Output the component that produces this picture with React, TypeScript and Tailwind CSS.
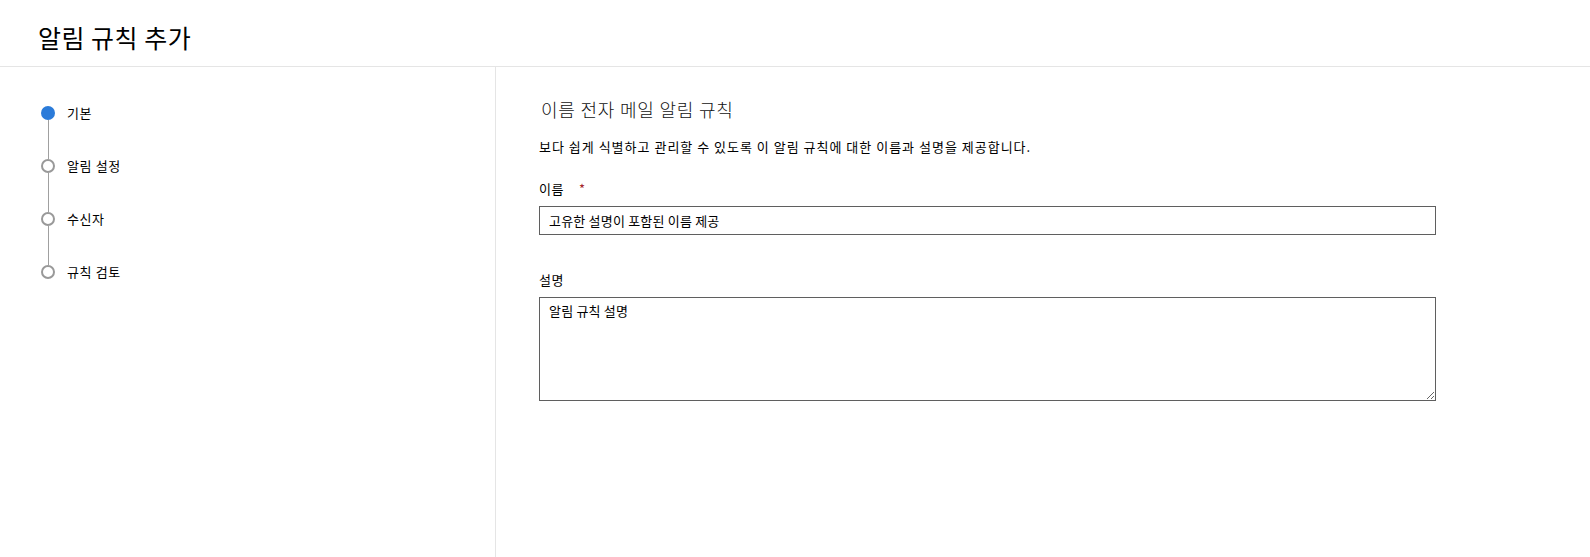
import React from "react";

const font = { fontFamily: '"Noto Sans CJK KR", "Noto Sans", sans-serif' };

const steps = ["기본", "알림 설정", "수신자", "규칙 검토"];

export default function App() {
  return (
    <div className="w-[1590px] h-[557px] bg-white text-black flex flex-col overflow-hidden" style={font}>
      <div className="h-[67px] border-b border-[#e5e5e5] flex items-center pl-[38px] pt-[8px] shrink-0">
        <h1 className="text-[25px] leading-none tracking-[0.5px]">알림 규칙 추가</h1>
      </div>
      <div className="flex flex-1">
        <div className="w-[496px] border-r border-[#e5e5e5] shrink-0 pl-[41px] pt-[39px]">
          {steps.map((s, i) => (
            <div key={s} className="flex">
              <div className="flex flex-col items-center w-[14px]">
                {i === 0 ? (
                  <div className="w-[14px] h-[14px] rounded-full bg-[#2b7bd9]" />
                ) : (
                  <div className="w-[14px] h-[14px] rounded-full border-2 border-[#999999] bg-white" />
                )}
                {i < steps.length - 1 && <div className="w-px h-[39px] bg-[#a0a0a0]" />}
              </div>
              <div className="ml-[12px] text-[13px] leading-[14px] tracking-[0.6px]">{s}</div>
            </div>
          ))}
        </div>
        <div className="flex-1 pl-[43px] pt-[30px]">
          <h2 className="text-[18px] leading-[24px] ml-[2px] font-light tracking-[0.8px] text-[#111]">이름 전자 메일 알림 규칙</h2>
          <p className="text-[13px] leading-[18px] mt-[17px] tracking-[1px]">
            보다 쉽게 식별하고 관리할 수 있도록 이 알림 규칙에 대한 이름과 설명을 제공합니다.
          </p>
          <div className="mt-[24px] text-[13px] leading-[18px] flex tracking-[0.5px]">
            <span>이름</span>
            <span className="ml-[15px] text-[#a4262c]">*</span>
          </div>
          <input
            className="mt-[8px] block w-[897px] h-[29px] border border-[#5f5f5f] px-[9px] text-[13px] outline-none tracking-[0.2px]"
            style={font}
            defaultValue="고유한 설명이 포함된 이름 제공"
          />
          <div className="mt-[36px] text-[13px] leading-[18px] tracking-[0.5px]">설명</div>
          <textarea
            className="mt-[8px] block w-[897px] h-[104px] border border-[#5f5f5f] px-[9px] py-[3px] text-[13px] outline-none resize-y tracking-[0.2px]"
            style={font}
            defaultValue="알림 규칙 설명"
          />
        </div>
      </div>
    </div>
  );
}
